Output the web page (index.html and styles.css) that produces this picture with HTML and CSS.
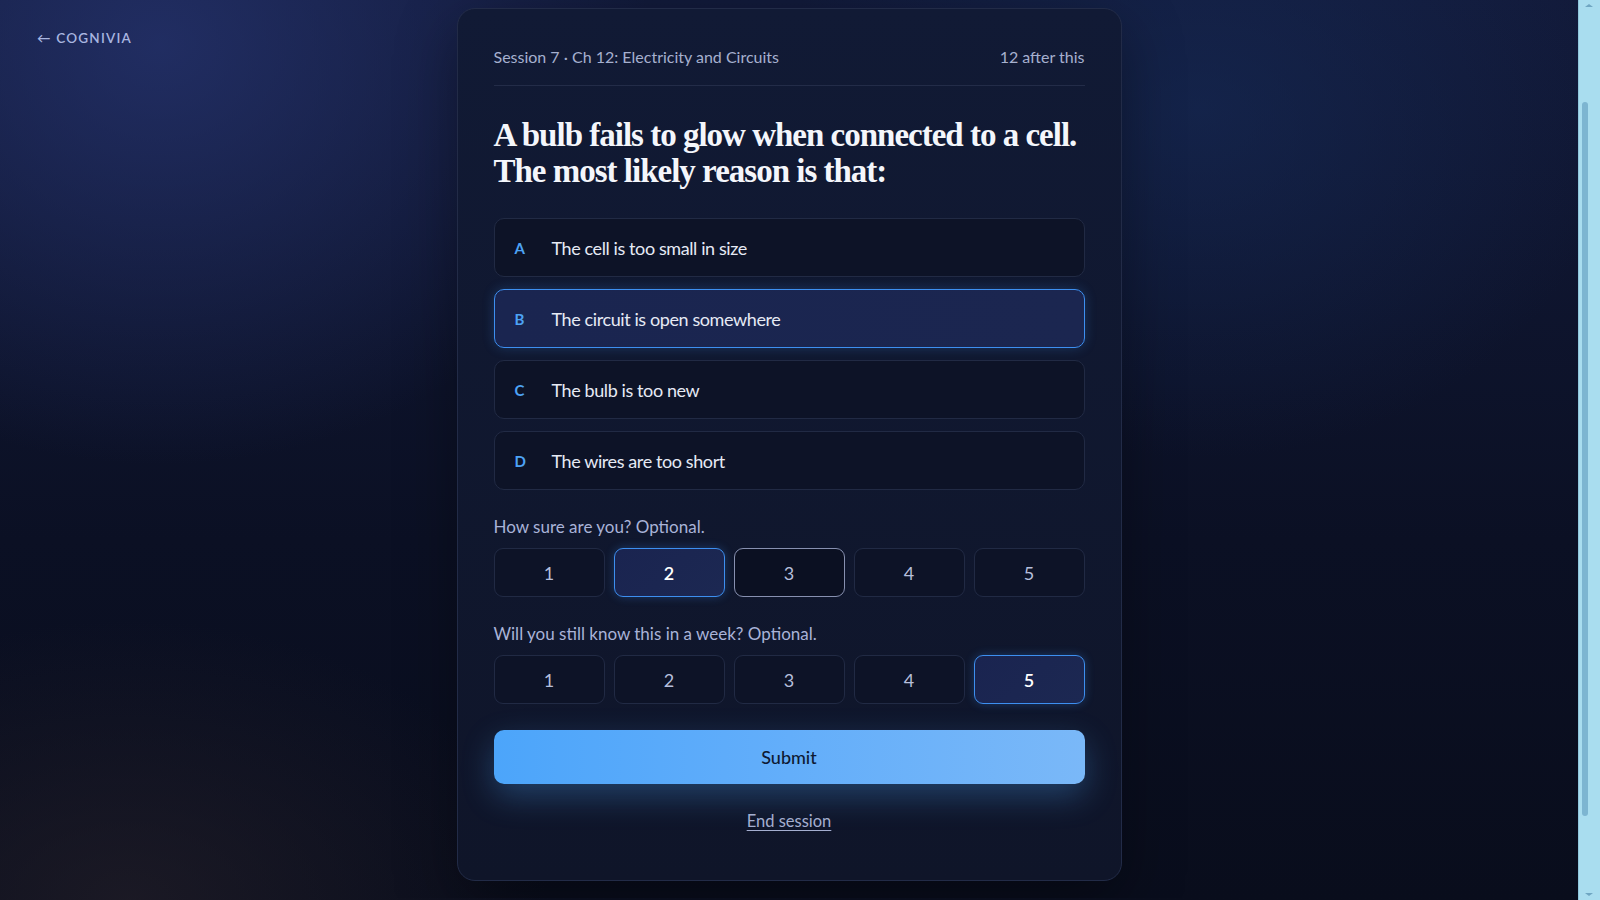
FILE: index.html
```html
<!DOCTYPE html>
<html lang="en">
<head>
    <meta charset="UTF-8">
    <meta name="viewport" content="width=device-width, initial-scale=1.0">
    <title>Cognivia · Session 7</title>
    <link rel="stylesheet" href="styles.css">
</head>
<body>
    <div class="page">
        <header class="brand">
            <a href="#" class="brand-link">&larr; COGNIVIA</a>
        </header>

        <main class="quiz-card">
            <div class="quiz-meta">
                <span>Session 7 · Ch 12: Electricity and Circuits</span>
                <span>12 after this</span>
            </div>

            <h1 class="question">A bulb fails to glow when connected to a cell. The most likely reason is that:</h1>

            <div class="options">
                <button class="option"><span class="option-key">A</span><span>The cell is too small in size</span></button>
                <button class="option selected"><span class="option-key">B</span><span>The circuit is open somewhere</span></button>
                <button class="option"><span class="option-key">C</span><span>The bulb is too new</span></button>
                <button class="option"><span class="option-key">D</span><span>The wires are too short</span></button>
            </div>

            <div class="scale-group">
                <p class="scale-label">How sure are you? Optional.</p>
                <div class="scale">
                    <button class="scale-btn">1</button>
                    <button class="scale-btn selected">2</button>
                    <button class="scale-btn hover">3</button>
                    <button class="scale-btn">4</button>
                    <button class="scale-btn">5</button>
                </div>
            </div>

            <div class="scale-group">
                <p class="scale-label">Will you still know this in a week? Optional.</p>
                <div class="scale">
                    <button class="scale-btn">1</button>
                    <button class="scale-btn">2</button>
                    <button class="scale-btn">3</button>
                    <button class="scale-btn">4</button>
                    <button class="scale-btn selected">5</button>
                </div>
            </div>

            <button class="submit">Submit</button>

            <div class="end">
                <a href="#" class="end-link">End session</a>
            </div>
        </main>
    </div>

    <!-- window scroll rail, as in the capture -->
    <div class="rail" aria-hidden="true">
        <span class="rail-arrow up"></span>
        <span class="rail-thumb"></span>
        <span class="rail-arrow down"></span>
    </div>
</body>
</html>
```

FILE: styles.css
```css
body {
    margin: 0;
    font-family: Lato, "Noto Sans", sans-serif;
    color: #e6eaf5;
    background-color: #0a0f21;
    background-image:
        radial-gradient(ellipse 700px 600px at 10% 5%, rgba(38, 52, 112, 0.75), transparent 70%),
        radial-gradient(ellipse 600px 500px at 75% 12%, rgba(22, 44, 90, 0.55), transparent 70%),
        radial-gradient(ellipse 600px 400px at 8% 100%, rgba(34, 30, 40, 0.7), transparent 70%),
        linear-gradient(180deg, #121a3a 0%, #0b1024 60%, #090d1c 100%);
    background-attachment: fixed;
}

.page {
    display: grid;
    grid-template-columns: 1fr 665px 1fr;
    padding: 8px 0 17px;
    margin-right: 22px;
}

.brand {
    padding: 19px 37px;
}

.brand-link {
    color: #a9b6e0;
    text-decoration: none;
    font-size: 13.5px;
    font-weight: 600;
    letter-spacing: 1.2px;
}

.quiz-card {
    background: linear-gradient(180deg, #111a35 0%, #0f1529 100%);
    border: 1px solid #222b47;
    border-radius: 18px;
    padding: 36px 36px 48px;
    box-shadow: 0 20px 60px rgba(0, 0, 0, 0.35);
}

.quiz-meta {
    display: flex;
    justify-content: space-between;
    font-size: 16px;
    line-height: 24px;
    color: #a6b0cf;
    padding-bottom: 16px;
    border-bottom: 1px solid #232c48;
}

.question {
    font-family: "Liberation Serif", "Times New Roman", serif;
    font-weight: 700;
    font-size: 33px;
    line-height: 36px;
    letter-spacing: -1px;
    color: #f4f6fb;
    margin: 31px 0 29px;
}

.options {
    display: flex;
    flex-direction: column;
    gap: 12px;
}

.option {
    display: flex;
    align-items: center;
    height: 59px;
    padding: 0 20px;
    background: #0d1327;
    border: 1px solid #212a44;
    border-radius: 10px;
    color: #e6eaf5;
    font-family: inherit;
    font-size: 18px;
    letter-spacing: -0.4px;
    text-align: left;
    cursor: pointer;
}

.option-key {
    width: 37px;
    flex: none;
    color: #4da3f5;
    font-weight: 700;
    font-size: 15px;
    letter-spacing: 0;
}

.option.selected {
    background: linear-gradient(90deg, #1a2550 0%, #1b2650 100%);
    border-color: #3d8ff0;
    box-shadow: 0 0 12px rgba(61, 143, 240, 0.25);
}

.scale-group {
    margin-top: 26px;
}

.scale-label {
    margin: 0 0 10px;
    font-size: 17px;
    line-height: 22px;
    color: #a9b3d8;
}

.scale {
    display: grid;
    grid-template-columns: repeat(5, 1fr);
    gap: 9px;
}

.scale-btn {
    height: 49px;
    background: #0d1327;
    border: 1px solid #212a44;
    border-radius: 9px;
    color: #b6bfdc;
    font-family: inherit;
    font-size: 18px;
    cursor: pointer;
}

.scale-btn.hover {
    background: #0b1022;
    border-color: #8790b0;
}

.scale-btn.selected {
    background: linear-gradient(135deg, #1a2450 0%, #1c2852 100%);
    border-color: #3d8ff0;
    color: #ffffff;
    font-weight: 600;
    box-shadow: 0 0 10px rgba(61, 143, 240, 0.3);
}

.submit {
    display: block;
    width: 100%;
    height: 54px;
    margin-top: 26px;
    border: none;
    border-radius: 10px;
    background: linear-gradient(90deg, #4ca5fa 0%, #63aefa 50%, #7ab8f8 100%);
    color: #0e1a33;
    font-family: inherit;
    font-size: 18px;
    font-weight: 500;
    cursor: pointer;
    box-shadow: 0 12px 32px rgba(76, 165, 250, 0.3);
}

.end {
    margin-top: 26px;
    text-align: center;
    line-height: 22px;
}

.end-link {
    color: #a4aed0;
    font-size: 16.5px;
    text-underline-offset: 3px;
}

.rail {
    position: fixed;
    top: 0;
    right: 0;
    bottom: 0;
    width: 22px;
    background: #a9ddef;
    border-left: 1px solid #8fc6dc;
    box-sizing: border-box;
}

.rail-thumb {
    position: absolute;
    top: 102px;
    bottom: 84px;
    left: 3px;
    width: 6px;
    border-radius: 3px;
    background: #7db5d1;
}

.rail-arrow {
    position: absolute;
    left: 6px;
    border-left: 4px solid transparent;
    border-right: 4px solid transparent;
}

.rail-arrow.up {
    top: 4px;
    border-bottom: 3px solid #6fa6c2;
}

.rail-arrow.down {
    bottom: 4px;
    border-top: 3px solid #6fa6c2;
}
```
